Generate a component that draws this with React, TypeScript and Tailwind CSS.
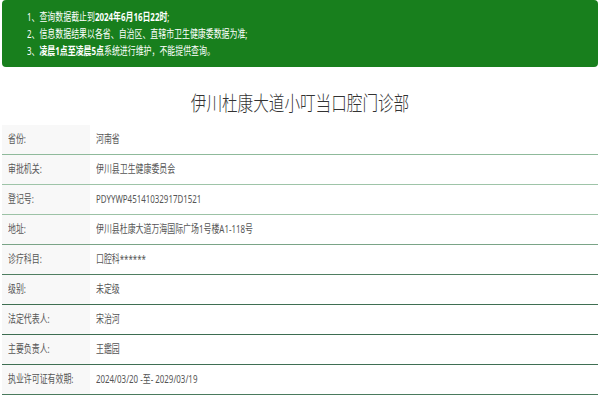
const rows = [
  { label: '省份:', value: '河南省', line: 'border-[#8fba9b]' },
  { label: '审批机关:', value: '伊川县卫生健康委员会', line: 'border-[#9ec4a8]' },
  { label: '登记号:', value: 'PDYYWP45141032917D1521', line: 'border-[#9cc2a6]' },
  { label: '地址:', value: '伊川县杜康大道万海国际广场1号楼A1-118号', line: 'border-[#7aa487]' },
  { label: '诊疗科目:', value: '口腔科******', line: 'border-[#4f7e61]' },
  { label: '级别:', value: '未定级', line: 'border-[#3f6f52]' },
  { label: '法定代表人:', value: '宋治河', line: 'border-[#3d6d51]' },
  { label: '主要负责人:', value: '王鑑园', line: 'border-[#3f6f53]' },
  { label: '执业许可证有效期:', value: '2024/03/20 -至- 2029/03/19', line: 'border-[#4a7a5d]' },
]

// text in the shot is squeezed sideways, so glyphs are narrowed
const Squeeze = ({ children, className = '' }: { children: React.ReactNode; className?: string }) => (
  <span className={`inline-block whitespace-nowrap origin-left scale-x-[0.72] ${className}`}>{children}</span>
)

export default function App() {
  return (
    <div className="w-[600px] h-[400px] overflow-hidden bg-white px-[2px] font-['Noto_Sans','Noto_Sans_CJK_SC',sans-serif]">
      <div className="bg-[#187f1d] rounded-[4px] pl-[25px] py-[8px] text-white text-[11px] leading-[17px]">
        <div><Squeeze>1、查询数据截止到<b className="font-bold">2024年6月16日22时</b>;</Squeeze></div>
        <div><Squeeze>2、信息数据结果以各省、自治区、直辖市卫生健康委数据为准;</Squeeze></div>
        <div><Squeeze>3、<b className="font-bold">凌晨1点至凌晨5点</b>系统进行维护，不能提供查询。</Squeeze></div>
      </div>

      <div className="mt-[22px] mb-[6px] h-[30px] flex justify-center items-center text-[20px] font-light leading-[30px] text-[#333]">
        <span className="inline-block whitespace-nowrap scale-x-[0.78]">伊川杜康大道小叮当口腔门诊部</span>
      </div>

      <div className="flex flex-col text-[11px] text-[#555]">
        {rows.map((r) => (
          <div key={r.label} className={`flex h-[30px] border-b ${r.line}`}>
            <div className="w-[88px] shrink-0 bg-[#f8f8f8] pl-[6px] flex items-center">
              <Squeeze>{r.label}</Squeeze>
            </div>
            <div className="flex-1 pl-[6px] flex items-center">
              <Squeeze>{r.value}</Squeeze>
            </div>
          </div>
        ))}
      </div>
    </div>
  )
}
